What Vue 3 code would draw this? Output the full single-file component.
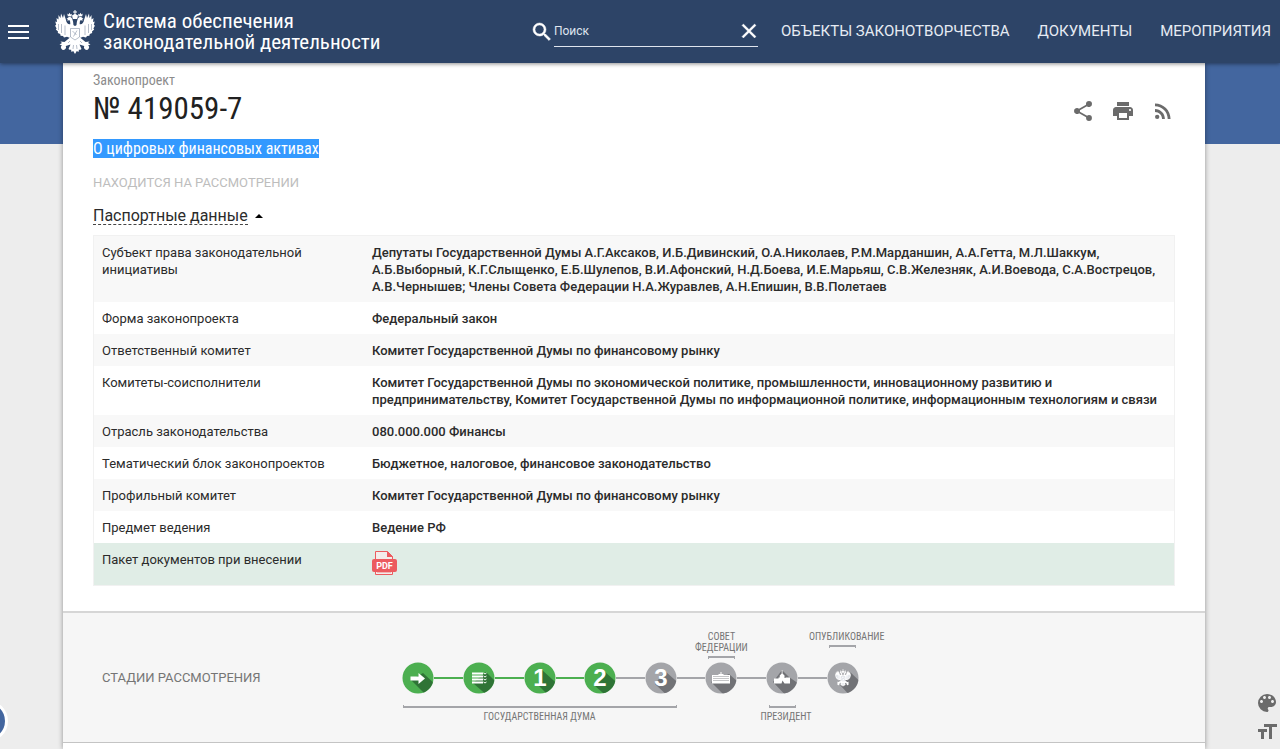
<script setup>
import { ref } from 'vue'

const query = ref('')
const open = ref(true)

const nav = ['Объекты законотворчества', 'Документы', 'Мероприятия']

const passport = [
  {
    name: 'Субъект права законодательной инициативы',
    value:
      'Депутаты Государственной Думы А.Г.Аксаков, И.Б.Дивинский, О.А.Николаев, Р.М.Марданшин, А.А.Гетта, М.Л.Шаккум, А.Б.Выборный, К.Г.Слыщенко, Е.Б.Шулепов, В.И.Афонский, Н.Д.Боева, И.Е.Марьяш, С.В.Железняк, А.И.Воевода, С.А.Вострецов, А.В.Чернышев; Члены Совета Федерации Н.А.Журавлев, А.Н.Епишин, В.В.Полетаев',
  },
  { name: 'Форма законопроекта', value: 'Федеральный закон' },
  { name: 'Ответственный комитет', value: 'Комитет Государственной Думы по финансовому рынку' },
  {
    name: 'Комитеты-соисполнители',
    value:
      'Комитет Государственной Думы по экономической политике, промышленности, инновационному развитию и предпринимательству, Комитет Государственной Думы по информационной политике, информационным технологиям и связи',
  },
  { name: 'Отрасль законодательства', value: '080.000.000 Финансы' },
  { name: 'Тематический блок законопроектов', value: 'Бюджетное, налоговое, финансовое законодательство' },
  { name: 'Профильный комитет', value: 'Комитет Государственной Думы по финансовому рынку' },
  { name: 'Предмет ведения', value: 'Ведение РФ' },
]

const stages = [
  { icon: 'arrow', done: true, shadow: 'M21 11 L36 25 L27 36 L9 18 Z' },
  { icon: 'list', done: true, shadow: 'M23 10 L40 27 L27 36 L10 21 Z' },
  { icon: 'digit', text: '1', done: true, shadow: 'M18 8 L40 28 L27 36 L14 23 Z' },
  { icon: 'digit', text: '2', done: true, shadow: 'M20 9 L40 27 L27 38 L10 23 Z' },
  { icon: 'digit', text: '3', done: false, shadow: 'M20 9 L40 27 L27 38 L10 22 Z' },
  { icon: 'council', done: false, shadow: 'M24 12 L40 26 L24 38 L6 20 Z' },
  { icon: 'kremlin', done: false, shadow: 'M16 8 L23 15 L40 27 L24 38 L7 20 Z' },
  { icon: 'eagle', done: false, shadow: 'M22 9 L40 26 L27 38 L13 23 Z' },
]
</script>

<template>
  <div class="app">
    <svg class="defs" aria-hidden="true">
      <symbol id="eagle-half" viewBox="0 0 40 44" overflow="visible">
        <path d="M16 14C13 15 11.500 13 11 10L9 4 8 8 6 3.500 5.500 8 3.500 5v4.500L1.500 8 2 12 .3 11.500 1.200 15 0 15.500l1.600 3-.8 1L3 21.500 2.800 23l2.400 1 .4 1.800L8 26l1 1.500 3-.7L20 30V16z" />
        <path d="M18.500 17c0-4-.6-7-1.500-8.500-.8-1.300-2.200-1.700-3.500-1.300l-2 1.800 1.500.3-1 1.200 2.500-.2c1 .7.500 2.700 1 4.700z" />
        <path d="M12.800 6.300l-.5-2.800 1.200 1 1-1.700 1 1.700 1.300-.7-.3 2.700z" />
        <path d="M15 27.500L9.500 32l-4-.5L7 33l-2.500 1.500 2.300.7a2.600 2.600 0 1 0 4 .8l4.700-1.500-2 4.500 1.500 1 1-.5.500 2.500 1.700-1L20 44V27z" />
      </symbol>
      <symbol id="eagle" viewBox="0 0 40 44">
        <use href="#eagle-half" width="40" height="44" />
        <g transform="translate(40 0) scale(-1 1)"><use href="#eagle-half" width="40" height="44" /></g>
        <path d="M19.500 0h1v1.500H22v1h-1.500V4l2.500 1.500-.8 3.500h-4.400L17 5.500 19.500 4V2.500H18v-1h1.500z" />
        <path class="detail" d="M15.500 18.500h9V27L20 30l-4.500-3zM17.500 21l4 4M22 20.500l-3.500 6M15 31l-2 2M25 31l2 2M18.500 35l-.5 4M21.500 35l.5 4M10 15.500V25M6.500 14v9M3.500 14v6M30 15.500V25M33.500 14v9M36.500 14v6" />
      </symbol>
    </svg>

    <header class="topbar">
      <button class="menu" aria-label="Меню">
        <svg width="21" height="14" viewBox="0 0 21 14"><path d="M0 1h21M0 7h21M0 13h21" stroke="#fff" stroke-width="2" /></svg>
      </button>
      <a class="brand" href="#">
        <svg class="emblem" width="40" height="44"><use href="#eagle" /></svg>
        <span>Система обеспечения<br />законодательной деятельности</span>
      </a>
      <form class="search" role="search" @submit.prevent>
        <label for="q" aria-label="Поиск">
          <svg width="24" height="24" viewBox="0 0 24 24"><path d="M15.500 14h-.79l-.28-.27A6.470 6.470 0 0 0 16 9.500 6.500 6.500 0 1 0 9.500 16c1.610 0 3.090-.59 4.230-1.570l.27.28v.79l5 4.990L20.490 19l-4.990-5zm-6 0C7.010 14 5 11.990 5 9.500S7.010 5 9.500 5 14 7.010 14 9.500 11.990 14 9.500 14z" stroke="#fff" stroke-width=".5" /></svg>
        </label>
        <div class="field">
          <input id="q" v-model="query" type="text" placeholder="Поиск" />
          <button type="button" aria-label="Очистить" @click="query = ''">
            <svg width="24" height="24" viewBox="0 0 24 24"><path d="M19 6.410 17.590 5 12 10.590 6.410 5 5 6.410 10.590 12 5 17.590 6.410 19 12 13.410 17.590 19 19 17.590 13.410 12z" stroke="#fff" stroke-width=".4" /></svg>
          </button>
        </div>
      </form>
      <nav class="nav">
        <a v-for="item in nav" :key="item" href="#">{{ item }}</a>
      </nav>
    </header>

    <div class="stage-area">
      <main class="sheet">
        <section class="bill">
          <div class="bill-head">
            <div>
              <p class="kind">Законопроект</p>
              <h1>№ 419059-7</h1>
            </div>
            <div class="actions">
              <button aria-label="Поделиться">
                <svg width="24" height="24" viewBox="0 0 24 24"><path d="M18 16.080c-.76 0-1.440.3-1.960.77L8.910 12.700c.05-.23.09-.46.09-.7s-.04-.47-.09-.7l7.050-4.110A2.990 2.990 0 0 0 21 5a3 3 0 1 0-6 0c0 .24.04.47.09.7L8.040 9.810A2.990 2.990 0 0 0 3 12a3 3 0 0 0 5.040 2.190l7.120 4.160c-.05.21-.08.43-.08.65A2.920 2.920 0 1 0 18 16.080z" /></svg>
              </button>
              <button aria-label="Печать">
                <svg width="24" height="24" viewBox="0 0 24 24"><path d="M19 8H5c-1.660 0-3 1.340-3 3v6h4v4h12v-4h4v-6c0-1.660-1.340-3-3-3zm-3 11H8v-5h8v5zm3-7c-.55 0-1-.45-1-1s.45-1 1-1 1 .45 1 1-.45 1-1 1zm-1-9H6v4h12V3z" /></svg>
              </button>
              <button aria-label="RSS">
                <svg width="24" height="24" viewBox="0 0 24 24"><circle cx="6.180" cy="17.820" r="2.180" /><path d="M4 4.440v2.830c7.030 0 12.730 5.700 12.730 12.730h2.830c0-8.590-6.970-15.560-15.560-15.560zm0 5.660v2.830c3.900 0 7.070 3.170 7.070 7.070h2.830c0-5.470-4.430-9.900-9.900-9.900z" /></svg>
              </button>
            </div>
          </div>
          <h2><mark>О цифровых финансовых активах</mark></h2>
          <p class="status">Находится на рассмотрении</p>
          <button class="toggle" :aria-expanded="open" @click="open = !open">
            <span>Паспортные данные</span>
            <svg width="8" height="4" viewBox="0 0 8 4"><path d="M0 4 4 0l4 4z" /></svg>
          </button>

          <table v-show="open" class="passport">
            <tbody>
              <tr v-for="row in passport" :key="row.name">
                <th scope="row">{{ row.name }}</th>
                <td>{{ row.value }}</td>
              </tr>
              <tr class="files">
                <th scope="row">Пакет документов при внесении</th>
                <td>
                  <a href="#" aria-label="PDF">
                    <svg width="25" height="24" viewBox="0 0 25 24">
                      <path d="M3.500 8V.5h12L20.500 5.500V8M3.500 20v3.500h17V20" fill="#f3ecea" stroke="#ec5b5f" />
                      <path d="M15 0v6h6z" fill="#ec5b5f" />
                      <path d="M5 21.500h14" stroke="#f3b5b5" />
                      <rect y="8" width="25" height="13" rx="2" fill="#ec5b5f" />
                      <text x="12.500" y="18" text-anchor="middle">PDF</text>
                    </svg>
                  </a>
                </td>
              </tr>
            </tbody>
          </table>
        </section>

        <section class="progress">
          <h3>Стадии рассмотрения</h3>
          <div class="timeline">
            <div class="tag top council"><span>Совет<br />Федерации</span></div>
            <div class="tag top publish"><span>Опубликование</span></div>
            <ol>
              <li v-for="(s, i) in stages" :key="i" :class="{ done: s.done }">
                <svg width="32" height="32" viewBox="0 0 32 32">
                  <clipPath :id="'disc' + i"><circle cx="16" cy="16" r="15.500" /></clipPath>
                  <circle class="disc" cx="16" cy="16" r="15.500" />
                  <path class="shade" :d="s.shadow" :clip-path="`url(#disc${i})`" />
                  <text v-if="s.icon === 'digit'" x="16" y="24" text-anchor="middle">{{ s.text }}</text>
                  <path v-else-if="s.icon === 'arrow'" d="M8.500 14.500h8V11l6.500 5.500-6.500 5.500v-3.500h-8z" />
                  <g v-else-if="s.icon === 'list'">
                    <path d="M9 10.500h11v2H9zM9 13.500h11v2H9zM9 16.500h11v2H9zM9 19.500h11v2H9z" />
                    <path d="M20.500 11l1.500 1 1.500-1M20.500 14l1.500 1 1.500-1M20.500 17l1.500 1 1.500-1M20.500 20l1.500 1 1.500-1" fill="none" stroke="#fff" stroke-width="1" />
                  </g>
                  <g v-else-if="s.icon === 'council'">
                    <path d="M15.500 10h1v2h2v1H25v8.500H7V13h6.500v-1h2z" />
                    <path class="windows" d="M8.500 14.500h15.500M8.500 16.500h15.500M8.500 18.500h15.500" />
                  </g>
                  <path v-else-if="s.icon === 'kremlin'" d="M15.700 8h.8v3.500l2 2V16h1v-.5h4.500V21.500h-5.500L16.500 18.500l-1 3H8V16.500h4.500V15.500h1.200v-2l2-2z" />
                  <use v-else href="#eagle" x="8" y="7" width="16" height="18" />
                </svg>
              </li>
            </ol>
            <div class="tag bottom duma"><span>Государственная Дума</span></div>
            <div class="tag bottom president"><span>Президент</span></div>
          </div>
        </section>
        <section class="next"></section>
      </main>
    </div>

    <button class="bubble" aria-label="Помощь"></button>
    <div class="tools">
      <button aria-label="Цветовая схема">
        <svg width="24" height="24" viewBox="0 0 24 24"><path d="M12 3a9 9 0 0 0 0 18c.83 0 1.500-.67 1.500-1.500 0-.39-.15-.74-.39-1.010-.23-.26-.38-.61-.38-.99 0-.83.67-1.500 1.500-1.500H16c2.760 0 5-2.240 5-5 0-4.420-4.030-8-9-8zm-5.500 9c-.83 0-1.500-.67-1.500-1.500S5.670 9 6.500 9 8 9.670 8 10.500 7.330 12 6.500 12zm3-4C8.670 8 8 7.330 8 6.500S8.670 5 9.500 5s1.500.67 1.500 1.500S10.330 8 9.500 8zm5 0c-.83 0-1.500-.67-1.500-1.500S13.670 5 14.500 5s1.500.67 1.500 1.500S15.330 8 14.500 8zm3 4c-.83 0-1.500-.67-1.500-1.500S16.670 9 17.500 9s1.500.67 1.500 1.500-.67 1.500-1.500 1.500z" /></svg>
      </button>
      <button aria-label="Размер шрифта">
        <svg width="24" height="24" viewBox="0 0 24 24"><path d="M9 4v3h5v12h3V7h5V4H9zm-6 8h3v7h3v-7h3V9H3v3z" /></svg>
      </button>
    </div>
  </div>
</template>

<style>
html,
body,
#app {
  height: 100%;
}
body {
  overflow: hidden;
  background: #ededed;
}
</style>

<style scoped>
.app {
  --condensed: "Roboto Condensed", "Liberation Sans Narrow", Roboto, sans-serif;
  display: flex;
  flex-direction: column;
  height: 100%;
  overflow: hidden;
  font-family: Roboto, "Open Sans", sans-serif;
  font-size: 13px;
  line-height: 17px;
  color: #2b2b2b;
}
.defs {
  position: absolute;
  width: 0;
  height: 0;
}
.detail {
  fill: none;
  stroke: #2d4467;
  stroke-width: 1;
  opacity: 0.35;
}
button {
  display: block;
  padding: 0;
  border: 0;
  background: none;
  font: inherit;
  color: inherit;
  cursor: pointer;
}
svg {
  display: block;
}
a {
  color: inherit;
  text-decoration: none;
}
h1,
h2,
h3,
p,
ol {
  margin: 0;
  padding: 0;
  font-weight: 400;
}

.topbar {
  position: relative;
  z-index: 2;
  flex: none;
  display: flex;
  align-items: center;
  height: 63px;
  padding: 0 9px 0 8px;
  background: #2d4467;
  box-shadow: 0 1px 4px rgba(0, 0, 0, 0.45);
  color: #fff;
  fill: #fff;
}
.brand {
  display: flex;
  align-items: center;
  gap: 8px;
  margin-left: 26px;
  font-family: var(--condensed);
  font-size: 21px;
  line-height: 21px;
}
.search {
  display: flex;
  align-items: center;
  margin-left: auto;
}
.field {
  display: flex;
  align-items: center;
  width: 204px;
  height: 30px;
  border-bottom: 1px solid #dfe5ee;
}
.field input {
  flex: 1;
  min-width: 0;
  padding: 0;
  border: 0;
  outline: 0;
  background: none;
  color: #fff;
  font: 12px/16px Roboto, sans-serif;
}
.field input::placeholder {
  color: #dfe5ee;
  opacity: 1;
}
.field button {
  margin-right: -3px;
}
.nav {
  display: flex;
  gap: 28px;
  margin-left: 23px;
  font-size: 15px;
  text-transform: uppercase;
  color: #e6ebf3;
}

.stage-area {
  flex: 1;
  padding: 0 75px 0 63px;
  background: linear-gradient(#43669f 81px, #ededed 81px);
}
.sheet {
  display: flex;
  flex-direction: column;
  height: 100%;
  background: #fff;
  box-shadow: 0 0 5px rgba(0, 0, 0, 0.4);
}
.bill {
  padding: 9px 30px 25px;
}
.bill-head {
  display: flex;
  justify-content: space-between;
  align-items: flex-end;
}
.kind {
  font-family: var(--condensed);
  font-size: 14px;
  color: #8c8c8c;
}
h1 {
  font-family: var(--condensed);
  font-size: 31px;
  line-height: 40px;
  color: #212121;
}
.actions {
  display: flex;
  gap: 16px;
  padding-bottom: 6px;
  fill: #6b6b6b;
}
h2 {
  margin-top: 10px;
  font-family: var(--condensed);
  font-size: 16px;
  line-height: 20px;
}
mark {
  background: #3399ff;
  color: #fff;
}
.status {
  margin-top: 15px;
  font-size: 13px;
  text-transform: uppercase;
  color: #bdbdbd;
}
.toggle {
  display: flex;
  align-items: center;
  gap: 7px;
  margin: 16px 0 10px;
  font-size: 16px;
}
.toggle span {
  border-bottom: 1px dashed #444;
}
.passport {
  width: 100%;
  border: 1px solid #f1f1f1;
  border-spacing: 0;
}
.passport tr:nth-child(odd) {
  background: #f8f8f8;
}
.passport .files.files {
  background: #e0ede6;
}
.passport th,
.passport td {
  padding: 8px 8px 7px;
  text-align: left;
  vertical-align: top;
  font-weight: 400;
}
.passport th {
  width: 254px;
}
.passport td {
  font-weight: 500;
}
.passport .files td {
  padding-bottom: 10px;
}
.passport text {
  font: 700 9px Roboto, sans-serif;
  fill: #fff;
}

.progress {
  display: flex;
  align-items: center;
  height: 129px;
  padding-left: 39px;
  border-top: 2px solid #d6d6d6;
  border-bottom: 1px solid #c4c4c4;
  background: #f6f6f6;
}
.progress h3 {
  width: 286px;
  font-size: 13px;
  text-transform: uppercase;
  color: #757575;
}
.timeline {
  display: grid;
  grid-template-columns: repeat(8, minmax(0, 1fr));
  grid-template-rows: 46px 32px 46px;
  width: 485px;
  font-family: var(--condensed);
  font-size: 10px;
  line-height: 11px;
  text-transform: uppercase;
  white-space: nowrap;
  color: #757575;
}
ol {
  grid-area: 2 / 1 / 3 / -1;
  display: grid;
  grid-template-columns: subgrid;
  list-style: none;
}
li {
  display: grid;
  grid-template-columns: 1fr 32px 1fr;
  align-items: center;
  --line: #a4a5a9;
  --disc: #a4a5a9;
  --shade: #717276;
  fill: #fff;
}
li.done {
  --disc: #4caf50;
  --shade: #2f7436;
  --line: #4caf50;
}
li::before,
li::after {
  content: "";
  height: 2px;
  background: var(--line);
}
li svg {
  grid-column: 2;
}
li:first-child::before,
li:last-child::after {
  background: none;
}
li:nth-child(4)::after {
  background: #a4a5a9;
}
li .disc {
  fill: var(--disc);
}
li .shade {
  fill: var(--shade);
}
li text {
  font: 700 24px "Liberation Sans", sans-serif;
}
.windows {
  fill: none;
  stroke: #8b8c90;
  stroke-width: 1;
  stroke-dasharray: 1 1;
}
.tag {
  display: flex;
  flex-direction: column;
  align-items: center;
  text-align: center;
}
.tag::before,
.tag::after {
  box-sizing: border-box;
  width: 27px;
  height: 3px;
  border: 0 solid #a4a5a9;
}
.top {
  grid-row: 1;
  padding-top: 15px;
}
.top::after {
  content: "";
  margin-top: 3px;
  border-width: 2px 1px 0;
}
.bottom {
  grid-row: 3;
  padding-top: 11px;
}
.bottom::before {
  content: "";
  margin-bottom: 3px;
  border-width: 0 1px 2px;
}
.council {
  grid-column: 6;
}
.publish {
  grid-column: 8;
}
.publish span,
.president span {
  padding-left: 8px;
}
.duma {
  grid-column: 1 / 6;
}
.duma::before {
  width: 274px;
}
.president {
  grid-column: 7;
}
.next {
  flex: 1;
}

.bubble {
  position: fixed;
  left: -34px;
  bottom: 7px;
  width: 42px;
  height: 42px;
  border: 3px solid #fff;
  border-radius: 50%;
  background: #43669f;
}
.tools {
  position: fixed;
  right: 1px;
  bottom: 5px;
  display: grid;
  gap: 5px;
  fill: #6b6b6b;
}
</style>
